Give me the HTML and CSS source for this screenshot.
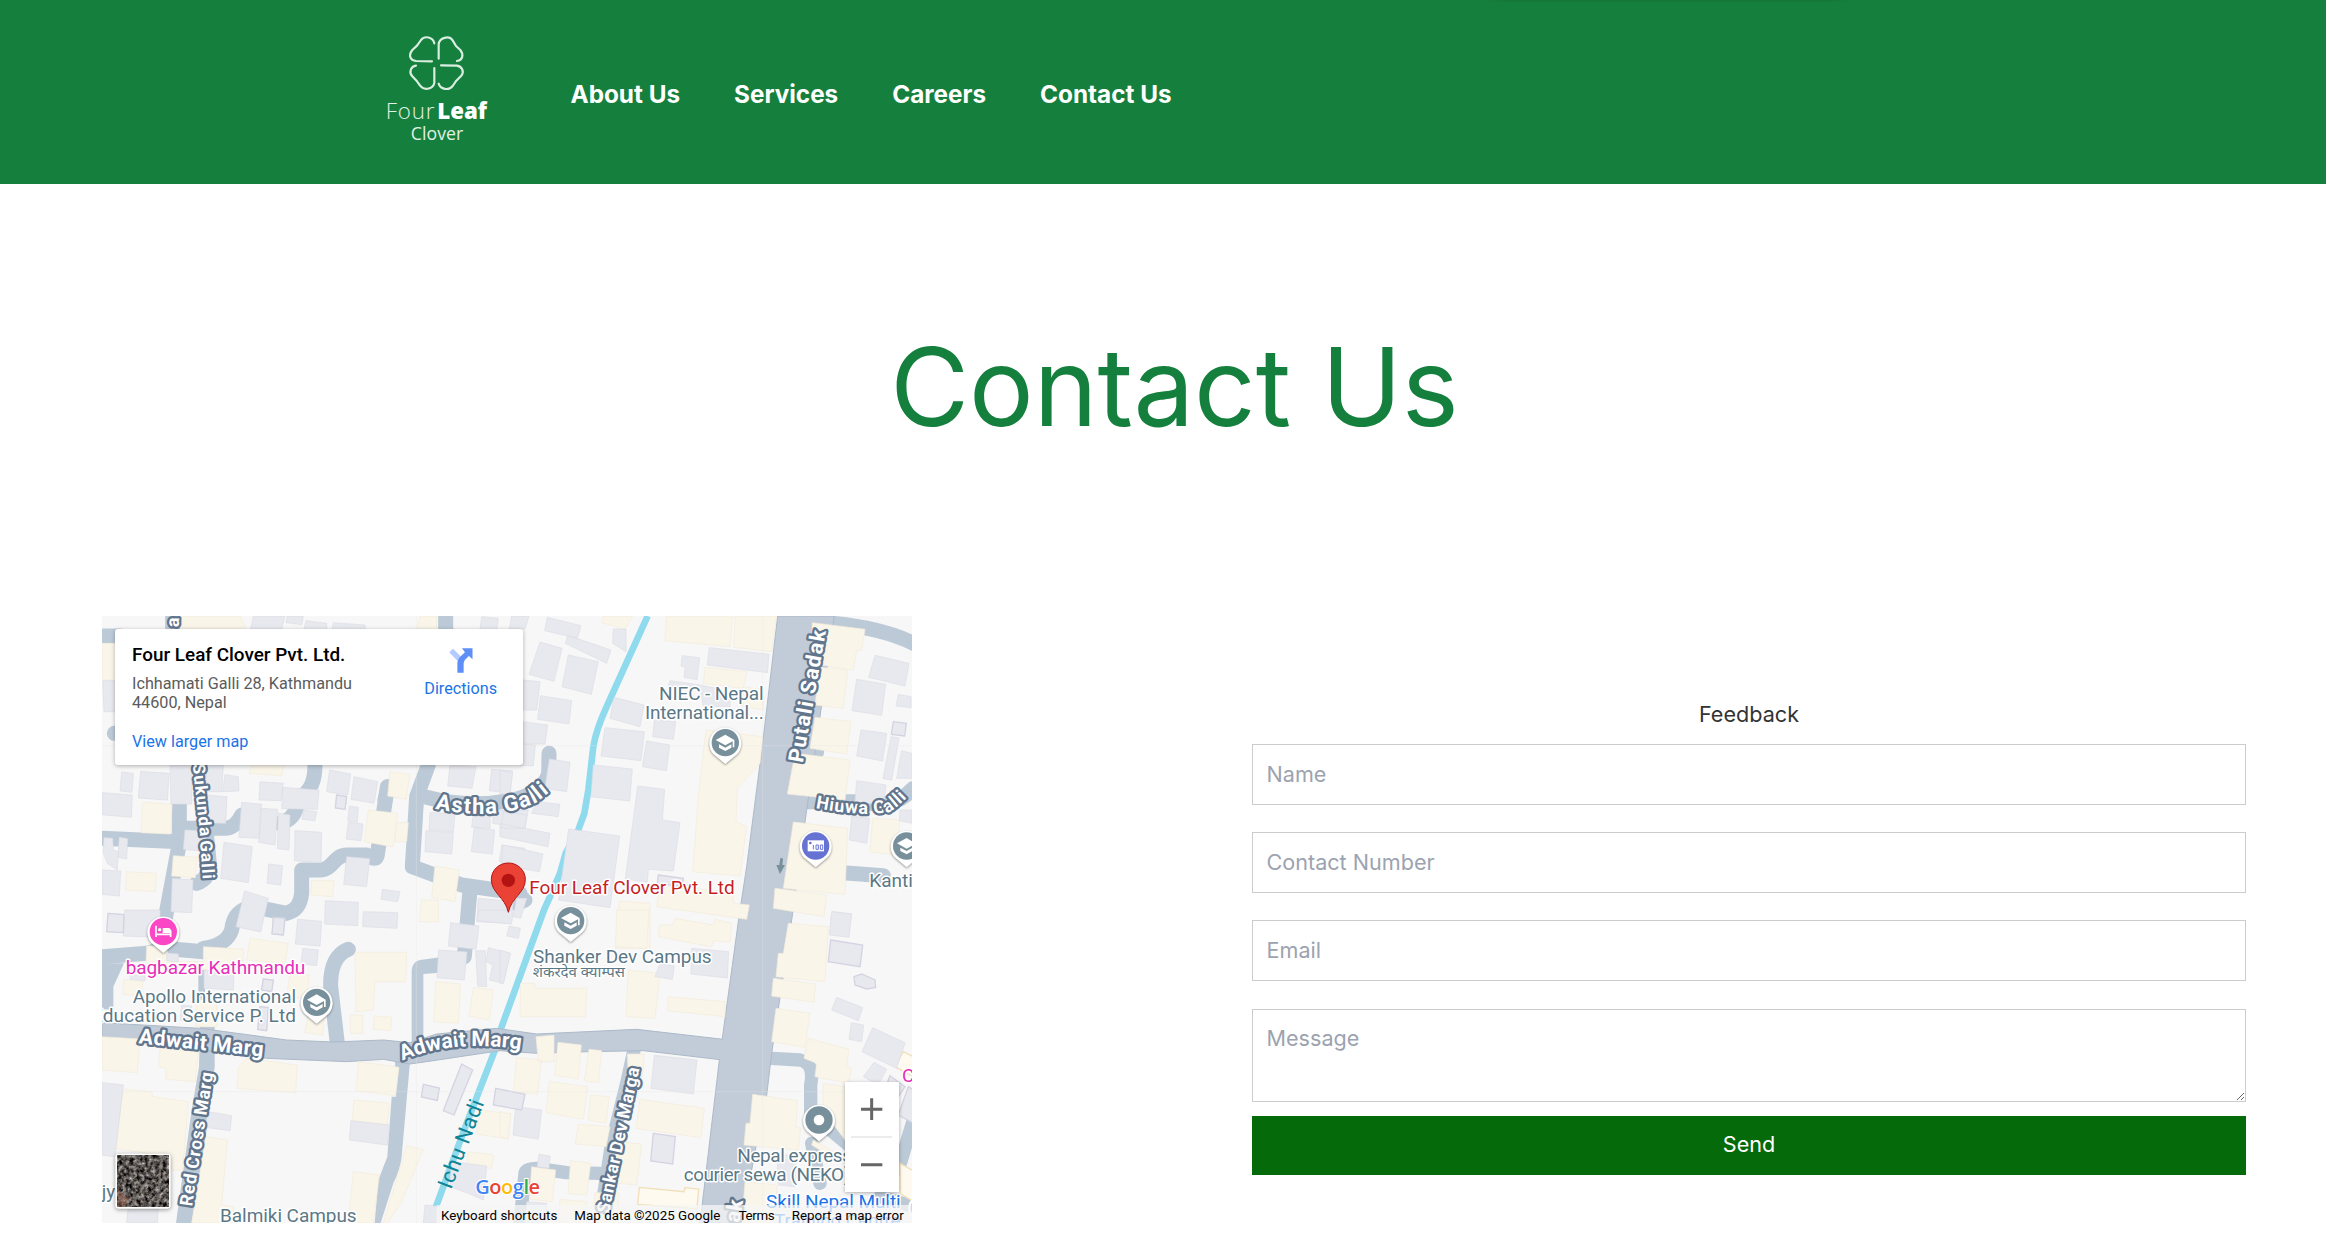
FILE: index.html
```html
<!DOCTYPE html>
<html lang="en">
<head>
<meta charset="utf-8">
<title>Contact Us - Four Leaf Clover</title>
<link rel="stylesheet" href="styles.css">
</head>
<body>
<header class="header">
  <svg class="logo" viewBox="0 0 360 375" role="img" aria-label="Four Leaf Clover">
    <g class="logo-lines">
      <path d="M178 55C174 36 149 31 138 45L126 62L112 75C99 92 106 106 123 108L171 109"/>
      <path d="M191 101V58C193 38 222 30 233 46L243 63L256 75C268 90 262 106 246 108"/>
      <path d="M123 122C107 124 101 142 112 154L126 169L137 184C150 199 176 190 178 173V129"/>
      <path d="M198 121L246 122C262 125 269 141 258 153L244 167L233 183C221 198 196 193 191 176"/>
    </g>
    <text class="logo-four" x="32" y="281" textLength="146">Four</text>
    <text class="logo-leaf" x="187" y="281" textLength="149" lengthAdjust="spacingAndGlyphs">Leaf</text>
    <text class="logo-clover" x="107" y="344" textLength="158">Clover</text>
  </svg>
  <nav class="nav">
    <a>About Us</a><a>Services</a><a>Careers</a><a>Contact Us</a>
  </nav>
</header>
<main>
  <h1 class="title">Contact Us</h1>
  <div class="columns">
    <section class="map">
      <svg class="map-canvas" viewBox="6 18 2430 1821">
        <defs>
          <g id="pin"><path class="pin-back" d="M0 64L-36 34A48 48 0 1 1 36 34Z"/></g>
          <g id="school"><use href="#pin"/><circle r="41" fill="#78909c"/><path fill="#fff" d="M0-24L-29-8 0 8 22-4V14H27V-8ZM-19 5V15L0 25 18 15V5L0 15Z"/></g>
          <filter id="satellite" x="0" y="0" width="100%" height="100%" color-interpolation-filters="sRGB">
            <feTurbulence type="fractalNoise" baseFrequency=".09" numOctaves="3" seed="8"/>
            <feColorMatrix values="1.1 .3 0 0 -.36  1.1 .26 0 0 -.36  1.1 .2 0 0 -.34  0 0 0 0 1"/>
          </filter>
        </defs>
        <path class="river" d="M1643 18L1520 290Q1488 360 1480 410L1465 540 1453 610 1435 660 1397 730 1380 790 1350 860 1332 900 1205 1250 1185 1320 1100 1540 990 1839"/>
        <g class="roads">
          <path class="w45" d="M6 78H60M218 18V60M1037 18V60M6 685L240 695M238 580V700L195 930 200 1020M250 655H375Q405 655 425 615M540 640Q580 630 590 590L610 555Q645 530 645 465M290 820Q330 805 328 760L320 680M500 898L560 910Q600 900 605 850V780H660C700 780 700 735 740 735H800Q830 755 832 735L862 530M985 465L950 560 937 770 1085 825 1260 850M1110 840L1093 1040"/>
          <path class="w45" d="M43 370H60M855 570L866 530M310 1015Q380 1005 395 960Q400 910 440 895"/>
          <path class="w45" d="M980 562Q1100 595 1230 572Q1330 550 1346 490L1347 430"/>
          <path class="w45" d="M2200 40Q2350 55 2440 100M2100 575H2290Q2380 600 2440 535M2230 788L2350 797M2110 426H2150M1250 880L1275 870"/>
          <path class="w45" d="M6 1040L140 1030 190 1015 310 1025M745 1018Q690 1040 692 1130L712 1300"/>
          <path d="M6 1060H72L40 1130V1200L6 1197ZM295 1060H315V1250H344V1370L320 1560 275 1839H228L275 1500 297 1370 300 1250H295ZM935 1300V1080Q937 1055 960 1050L1020 1042V1088L970 1092V1300ZM885 1355H930L905 1640Q900 1680 880 1720L842 1839H824L835 1710 862 1640 875 1460H888Z"/>
          <path class="w40" d="M1602 1320L1580 1420 1535 1600 1510 1760M1260 1839L1275 1690Q1278 1675 1310 1675L1400 1688 1500 1690M2015 1345L2100 1350Q2145 1360 2132 1425V1510L2245 1605 2320 1680M2440 1530L2395 1680M2135 1600L2160 1720M2340 1760L2440 1790"/>
        </g>
        <g class="main-roads">
          <path d="M6 1238L300 1255 560 1290 700 1296 850 1290 930 1298 1010 1272 1190 1255 1310 1272 1610 1258 1870 1288V1350L1630 1322 1465 1325 1310 1330 1200 1322 1000 1352 930 1362 850 1348 740 1355 500 1345 6 1280Z"/>
          <path d="M2033 18H2203L2120 600 2078 910 2015 1330 2000 1456 1970 1600 1925 1839H1800L1858 1350 1917 920 1940 770 1988 400Z"/>
        </g>
        <path class="road-fill" d="M1845 1287L1880 1291V1349L1845 1346ZM300 1262H345V1320H300Z"/>
        <!-- shops and commercial blocks -->
        <g class="shops">
          <path d="M6 100H50V210H6ZM240 18H420L437 55H240ZM960 18H1010V57H950ZM128 577L216 583 212 672 123 668ZM220 737L290 742 286 803 215 798ZM80 785L170 790 166 845 76 840ZM455 465H552L545 497 448 490ZM870 485L930 493 918 568 863 558ZM805 600L893 610 880 711 793 695ZM890 638H925L920 695H885ZM635 812H703L698 860 632 855ZM1005 768L1078 780 1065 875 995 862ZM965 870H1015V935H958Z"/>
          <path transform="translate(1200)" d="M310 18H398L375 57 305 38ZM500 18H697L690 110 495 92ZM705 18H830L815 125 702 112ZM615 172L740 185 730 235 610 220ZM730 230L790 240V300L728 290ZM618 360L788 380 780 460 712 535 708 635 740 650 720 798 578 785 595 560ZM937 38L1095 58 1085 120H1070L1060 180 930 160ZM960 172L1043 180 1030 295 945 285ZM945 322L1053 335 1040 432 930 415ZM885 430L1050 450 1035 570 862 552ZM880 636L1043 655 1035 853 850 835ZM1118 625L1200 630 1190 735 1110 725ZM825 835L980 855 972 920 820 895ZM480 828L700 845V880L748 885 740 928 470 890ZM358 873L450 880V1015H345Z"/>
          <path transform="translate(0 900)" d="M140 108H195L215 155H310V110L432 118 425 195 315 180 240 170 138 160ZM450 85L565 100 555 160 440 150ZM72 208L130 215 120 260 68 252ZM570 190L628 195 620 265 560 260ZM765 127H920L917 215H825L820 300 768 305ZM625 310L672 320 668 375 615 368ZM750 315H788V370H752ZM822 318L875 322 872 362 820 358ZM1007 215L1082 222 1075 340 1002 335ZM1120 232L1180 240 1168 330 1107 318ZM290 270H350V350H287ZM6 380L120 387 112 488 6 480ZM180 415L295 425 285 515 198 508V475L176 470ZM415 472L440 445 592 465 587 548 411 535ZM776 455L897 472 887 557 768 542ZM762 570L868 580 862 645 757 632ZM70 537L155 545 158 560 265 575 248 780H215L210 740 45 715ZM318 680L382 690 365 885 400 890V939H275ZM760 785L838 795 820 939H745ZM920 707L970 718 905 875 862 939H850ZM1140 600L1232 612 1225 687 1130 672ZM1105 725L1182 735 1175 775 1100 765Z"/>
          <path transform="translate(1200 900)" d="M350 0H447L440 115 347 110ZM525 25L640 45 645 28 695 40 690 97 640 92 635 110 475 80 478 45H518ZM385 180L480 190 465 325 378 320ZM62 220H105V235H260L257 320H60ZM505 260L675 275V320L502 302ZM865 40L985 50 975 215 828 200 835 130H850ZM820 205L947 222 942 277 815 258ZM828 295L930 310 915 412 815 395ZM925 385L1047 418 1040 470 1055 475 1045 520 945 500 950 460 912 445ZM108 380L162 376V455H115ZM174 397L244 405 235 507 164 495ZM267 418L305 422 295 518 253 512ZM382 432H432L428 498H385ZM50 443L125 450 112 553 40 545ZM148 515L263 530 250 628 138 608ZM272 555L328 560 318 640 265 630ZM235 643L330 650 318 710 226 702ZM352 695L425 702 410 825 335 818ZM420 568L613 595 603 683 408 655ZM95 770L167 780 157 875 88 868ZM212 752L272 760 260 855 204 850ZM285 848L357 850 350 939H280ZM0 605L32 612 25 687 0 680ZM180 868L260 875V939H176ZM758 553L892 572 888 650 902 655 895 720 732 705 738 640H750ZM970 520L1035 530V690L968 600ZM735 815L830 825V939H725ZM940 690L1010 730 1000 745 935 705Z"/>
          <path class="outlined" d="M1618 1732L1752 1745 1755 1733 1796 1737 1791 1796 1613 1783ZM2410 1325L2440 1340V1400L2385 1370ZM2400 1660L2440 1682V1775L2400 1750Z"/>
        </g>
        <!-- residential buildings -->
        <g class="houses">
          <path d="M460 18H555L545 57H452ZM562 18H610L605 44 558 38ZM618 32L680 40V60H612ZM700 38L795 45V60H695ZM1145 20L1195 25 1190 60H1140ZM8 212H46V305H12ZM65 486L100 490 96 547 60 543ZM122 484L208 490 202 570 115 564ZM210 465H275V582H213ZM318 465H370L365 545H322ZM375 494L415 500 417 543 368 545ZM480 515L550 520 543 572 477 570ZM548 532L657 540 652 598 545 596ZM612 600L650 605 645 632 606 628ZM689 480L752 492 743 555 680 545ZM762 500L833 515 822 580 753 568ZM710 555L740 560 735 598 706 594ZM6 548L97 555 94 622 6 614ZM425 577L485 583 478 685 417 682ZM482 595L533 598 525 705 476 697ZM535 610L570 615 567 720 532 716ZM585 662L665 667 663 758 583 752ZM748 588L775 592 772 637 743 633ZM745 637L789 642 783 692 738 687ZM320 555L381 560 377 640 322 638ZM255 660L320 663V725L250 718ZM12 683L38 685 40 720 55 725 52 780 22 760 10 730ZM58 682L83 686 80 747 54 742ZM372 697L457 710 445 818 362 805ZM506 762L548 767 542 825 501 820ZM740 740L809 746 800 830 731 823ZM6 780L62 783 58 858 6 853ZM217 805L279 810 275 908 213 905ZM434 843L505 865 482 966 408 950ZM676 872L775 877 773 947 674 942ZM847 838L900 845 893 875 843 868ZM790 905L893 908 891 955 788 950ZM1050 465L1128 470 1116 535 1043 528ZM1175 478L1237 482 1230 550 1168 542ZM990 607L1065 612 1060 665 987 660ZM1120 610L1170 615V655L1115 652ZM1180 600H1285L1275 655 1178 640ZM978 662L1060 668 1055 732 975 725ZM1123 652L1184 660 1177 732 1114 725ZM1205 705L1275 715V770L1198 755ZM1135 865L1240 875 1230 940 1130 935Z"/>
          <path transform="translate(1200)" d="M35 18H87L75 57H28ZM142 22L243 47 232 85 134 62ZM120 96L186 115 162 214 87 193ZM203 76L333 120 320 160 196 100ZM205 135L295 155 274 253 186 230ZM340 57H378V125L338 100ZM70 210L120 215 110 300H70ZM121 257L215 272 207 342 113 328ZM70 335L143 345 135 402H70ZM70 402L106 405 100 467H60ZM342 262L432 285 420 350 330 325ZM315 353L433 365 423 452 303 438ZM463 330L527 335 520 388 458 380ZM440 393L509 405 499 482 427 470ZM547 137L599 143 591 209 552 202 555 172 543 168ZM628 113L807 133 802 188 622 165ZM510 212L600 225 650 235 690 265V290L610 288 600 235 505 228ZM280 465L397 477 389 573 273 560ZM148 447L210 457 200 545 135 535ZM0 482L38 488 30 552H0ZM413 528L494 538 487 630 540 638 520 783 445 778 442 817 376 807ZM206 657L359 678 330 893 176 870ZM110 575L180 583 174 620 95 610ZM10 605L80 615 75 655H5ZM0 640L150 670 144 710 0 680ZM10 705L129 732 118 785 5 765ZM1125 136L1227 160 1215 228 1106 202ZM1070 208L1157 223 1145 316 1056 302ZM1195 253L1233 260V293L1188 288ZM1083 360L1160 370 1148 453 1070 438ZM1173 380L1197 384 1175 510 1149 506ZM1205 422L1236 430V505H1190ZM1070 512L1158 525 1150 585 1065 575ZM1055 618L1109 625 1100 700 1048 690ZM1200 600H1236V640L1198 632ZM998 905L1055 912 1050 930H992ZM80 865L62 925 40 920 50 865Z"/>
          <path transform="translate(0 900)" d="M24 10L72 14 70 68 20 65ZM74 0H180V82L70 78ZM520 22L555 25 550 75 516 72ZM593 28L665 34 660 108 586 102ZM608 115L655 120 650 167 603 162ZM200 130L235 132V155L200 153ZM312 180L402 185 400 240 312 235ZM92 180L135 185V212L90 208ZM490 207L520 210 515 245 485 240ZM480 290L505 293 500 362 473 358ZM245 285L275 288 270 335 241 330ZM1052 38L1137 48 1128 118 1045 108ZM1016 120L1101 126 1093 210 1011 203ZM1127 122H1156L1160 230 1133 228ZM1165 113L1230 130 1210 220 1168 210 1178 165 1158 155ZM1137 0H1240L1235 42 1131 32ZM6 518L70 525 45 740 6 735ZM325 605L395 617 390 662 315 652ZM753 632L869 645 862 705 748 690ZM85 890L175 895 172 939H80ZM975 885L1020 890V939H970ZM1055 755L1160 768 1150 870 1105 850 1050 830Z"/>
          <path transform="translate(1200 900)" d="M28 48L61 55 55 85 20 78ZM0 120L32 130 10 220H0ZM480 160L523 168 517 208 465 200ZM575 115L686 125 682 204 573 192ZM995 5L1055 12 1047 82 988 75ZM1010 262L1088 293 1075 332 995 300ZM1054 338L1091 345 1085 395 1047 388ZM1118 353L1215 398 1190 475 1086 425ZM1122 457L1160 478 1135 525 1090 500ZM463 436L591 450 580 552 453 535ZM47 590L125 600 115 688 39 675ZM117 733L150 738 147 775 112 770ZM80 875L140 880V939H75ZM830 730L890 740 885 830 835 825Z"/>
          <path class="edged" d="M710 555L740 560 735 598 706 594ZM1675 795L1750 805 1747 830 1672 820ZM2380 335L2419 340 2414 378 2374 373ZM24 910L72 914 70 968 20 965ZM520 922L555 925 550 975 516 972ZM490 1107L520 1110 515 1145 485 1140ZM480 1190L505 1193 500 1262 473 1258ZM1085 1362L1118 1380 1062 1515 1030 1502ZM970 1423L1018 1434 1012 1471 964 1461ZM1187 1435L1275 1453 1265 1500 1180 1485ZM2192 990L2288 1005 2280 1070 2185 1055ZM2262 1100L2285 1092 2325 1110 2327 1132 2300 1137 2265 1125ZM1660 1570L1726 1580 1718 1662 1652 1653ZM2370 1397L2415 1430 2395 1460 2350 1450ZM2425 1430L2440 1440V1540L2395 1515Z"/>
        </g>
        <path class="tile-lines" d="M949 18V1839M1988 18V1839M6 407H2436M6 1445H2436"/>
        <path fill="#78909c" d="M2041 745H2049L2047 765H2055L2040 792 2029 765H2038Z"/>
        <g class="road-labels">
          <text class="size-m" transform="translate(236 52) rotate(-88)">a</text>
          <text class="size-s" transform="translate(278 463) rotate(84)" textLength="218">Sukunda</text>
          <text class="size-s" transform="translate(300 692) rotate(86)" textLength="116">Galli</text>
          <path id="astha" fill="none" stroke="none" d="M1005 596Q1190 635 1310 577L1375 525"/>
          <text class="size-l"><textPath href="#astha" textLength="360">Astha Galli</textPath></text>
          <text class="size-xl" transform="translate(2108 460) rotate(-80)" textLength="402">Putali Sadak</text>
          <path id="hiuwa" fill="none" stroke="none" d="M2146 594Q2290 622 2370 605 2410 580 2450 530"/>
          <text class="size-m"><textPath href="#hiuwa" textLength="292">Hiuwa Galli</textPath></text>
          <text class="size-xl" transform="translate(115 1300) rotate(6)" textLength="376">Adwait Marg</text>
          <path id="adwait" fill="none" stroke="none" d="M907 1352Q1060 1285 1275 1320"/>
          <text class="size-xl"><textPath href="#adwait" textLength="362">Adwait Marg</textPath></text>
          <text class="size-m" transform="translate(276 1790) rotate(-81)" textLength="406">Red Cross Marg</text>
          <text class="size-m" transform="translate(1526 1812) rotate(-78)" textLength="446">Sankar Dev Marga</text>
          <text class="size-xl" transform="translate(1918 1840) rotate(-80)">ak</text>
        </g>
        <text class="river-label" transform="translate(1053 1740) rotate(-69)" textLength="280">Ichu Nadi</text>
        <use href="#school" x="1876" y="398"/>
        <use href="#school" x="2420" y="708"/>
        <use href="#school" x="1412" y="932"/>
        <use href="#school" x="650" y="1177"/>
        <g transform="translate(2147 708)"><use href="#pin"/><circle r="41" fill="#6773d3"/><path fill="#fff" d="M-24-17H25V16H-24Z"/><circle cx="-16" cy="-9" r="4" fill="#6773d3"/><path class="note" d="M-7-3V10M1-3H8V10H1ZM14-3H21V10H14Z"/></g>
        <g transform="translate(190 965)"><use href="#pin"/><circle r="41" fill="#fb46c6"/><path stroke="#fff" stroke-width="5" fill="none" d="M-22-18V16M-22 8H22M22 16V-4"/><circle cx="-11" cy="-6" r="5" fill="#fff"/><path fill="#fff" d="M-2-11H16Q23-10 23 0V4H-2Z"/></g>
        <g transform="translate(2157 1530)"><use href="#pin"/><circle r="41" fill="#78909c"/><circle r="16" fill="#fff"/></g>
        <g class="place-labels">
          <text x="1677" y="270" textLength="314">NIEC - Nepal</text>
          <text x="1635" y="328" textLength="356">International...</text>
          <text x="2308" y="832">Kanti</text>
          <text x="1299" y="1058" textLength="536">Shanker Dev Campus</text>
          <text class="nepali" x="1298" y="1102" textLength="277" lengthAdjust="spacingAndGlyphs">शंकरदेव क्याम्पस</text>
          <text x="98" y="1178" textLength="490">Apollo International</text>
          <text x="-24" y="1235" textLength="612">Education Service P. Ltd</text>
          <text x="360" y="1836" textLength="410">Balmiki Campus</text>
          <text x="5" y="1765">jy</text>
          <text x="1912" y="1656" textLength="344">Nepal express</text>
          <text x="1751" y="1713" textLength="500">courier sewa (NEKO)</text>
          <text class="pink" x="77" y="1092" textLength="539">bagbazar Kathmandu</text>
          <text class="pink" x="2406" y="1415">C</text>
          <text class="blue" x="1998" y="1795" textLength="404">Skill Nepal Multi</text>
          <text class="blue" x="2022" y="1851" textLength="380">Training Centre</text>
          <text class="red" x="1288" y="853" textLength="616">Four Leaf Clover Pvt. Ltd</text>
        </g>
        <circle class="blue-dot" cx="2460" cy="1795" r="32"/>
        <path fill="#ea4335" stroke="#b31412" stroke-width="3" d="M1225 907C1215 860 1174 850 1174 808A51 49 0 0 1 1276 808C1276 850 1235 860 1225 907Z"/>
        <circle cx="1225" cy="811" r="20" fill="#b31412"/>
        <text class="google" x="1126" y="1753"><tspan fill="#4285f4">G</tspan><tspan fill="#ea4335">o</tspan><tspan fill="#fbbc04">o</tspan><tspan fill="#4285f4">g</tspan><tspan fill="#34a853">l</tspan><tspan fill="#ea4335">e</tspan></text>
        <path class="credits-back" d="M1010 1785H2436V1839H1010Z"/>
        <g class="credits">
          <text x="1023" y="1829" textLength="349">Keyboard shortcuts</text>
          <text x="1423" y="1829" textLength="438">Map data ©2025 Google</text>
          <text x="1916" y="1829" textLength="108">Terms</text>
          <text x="2075" y="1829" textLength="336">Report a map error</text>
        </g>
        <g class="thumb">
          <rect x="46" y="1631" width="166" height="165" rx="10" fill="#fff"/>
          <rect x="52" y="1636" width="155" height="154" filter="url(#satellite)"/>
          <path d="M185 1636L172 1790M145 1710L90 1790" stroke="#8d8781" stroke-width="6" opacity=".6"/>
          <path d="M52 1740L90 1765 75 1790H52Z" fill="#a9745c" opacity=".45"/>
        </g>
      </svg>
      <div class="place-card">
        <div>
          <div class="place-name">Four Leaf Clover Pvt. Ltd.</div>
          <div class="place-address">Ichhamati Galli 28, Kathmandu<br>44600, Nepal</div>
          <a class="place-link">View larger map</a>
        </div>
        <a class="directions">
          <svg viewBox="0 0 72 76"><path fill="#b3cbff" d="M12 2L38 28 28 42 0 13Z"/><path fill="#5e8ff7" d="M39 1H71V34L60 24 49 35Q44 40 44 48V75H25V48Q25 34 36 24L48 13Z"/></svg>
          Directions
        </a>
      </div>
      <div class="zoom">
        <svg viewBox="0 0 162 330"><path stroke="#666" stroke-width="9" d="M48 82H112M80 49V114M48 248H112"/><path stroke="#e6e6e6" stroke-width="5" d="M18 165H141"/></svg>
      </div>
    </section>
    <form class="form">
      <label class="form-title">Feedback</label>
      <input class="field" placeholder="Name">
      <input class="field" placeholder="Contact Number">
      <input class="field" placeholder="Email">
      <textarea class="field message" placeholder="Message"></textarea>
      <button class="send" type="button">Send</button>
    </form>
  </div>
</main>
</body>
</html>
```
FILE: styles.css
```css
* { box-sizing: border-box; }
html { font-size: 21.6px; }
body { margin: 0; background: #fff; font-family: Inter, sans-serif; color: #333; overflow: hidden; }
.header { display: flex; align-items: flex-start; height: 184px; padding: 25px 0 0 375px; background: linear-gradient(90deg, transparent, rgba(0, 0, 0, .07) 8%, rgba(0, 0, 0, .07) 92%, transparent) 1480px 0 / 375px 2px no-repeat #15803d; }
.logo { width: 120px; height: 125px; flex: none; }
.logo-lines { fill: none; stroke: #d9eee0; stroke-width: 6.5; stroke-linecap: round; stroke-linejoin: round; }
.logo text { font-family: "Open Sans", Lato, sans-serif; fill: #e0f1e5; }
.logo-four { font-size: 67px; font-weight: 300; }
.logo .logo-leaf { font-size: 67px; font-weight: 800; fill: #fff; }
.logo-clover { font-size: 53px; font-weight: 400; }
.nav { display: flex; gap: 54px; padding: 53px 0 0 75.5px; }
.nav a { font-size: 24.3px; line-height: 32px; font-weight: 700; color: #fff; white-space: nowrap; }
.title { margin: 0; padding: 149px 0 0 23px; font-size: 108px; line-height: 108px; font-weight: 400; text-align: center; color: #15803d; }
.columns { display: flex; justify-content: space-between; align-items: flex-start; padding: 175px 80px 0 102px; }
.map { position: relative; width: 810px; height: 607px; overflow: hidden; font-family: Roboto, sans-serif; }
.map-canvas { display: block; width: 810px; height: 607px; background: #f7f7f7; }
.map-canvas text { font-family: Roboto, sans-serif; }
.river { fill: none; stroke: #90daee; stroke-width: 20; }
.roads { fill: #bccad7; }
.roads .w45, .roads .w40 { fill: none; stroke: #bccad7; stroke-width: 45; stroke-linecap: round; stroke-linejoin: round; }
.roads .w40 { stroke-width: 40; }
.main-roads { fill: #c2cbd8; stroke: #acbac9; stroke-width: 3; }
.road-fill { fill: #c2cbd8; }
.shops { fill: #faf5e9; stroke: #f3ecdb; stroke-width: 2; }
.shops .outlined { fill: #fefaf0; stroke: #f0dfb9; stroke-width: 4; }
.houses { fill: #e8e9ef; stroke: #dcdde6; stroke-width: 2; }
.houses .edged { stroke: #d5d3e2; stroke-width: 4; }
.tile-lines { fill: none; stroke: #e8e8e4; stroke-width: 2; opacity: .5; }
.road-labels text { font-weight: 700; fill: #fff; stroke: #61758d; stroke-width: 14; stroke-linejoin: round; paint-order: stroke; }
.size-s { font-size: 51px; }
.size-m { font-size: 54px; }
.size-l { font-size: 66px; }
.size-xl { font-size: 64px; }
.map-canvas .river-label { font-size: 64px; fill: #0e8495; }
.pin-back { fill: #fff; filter: drop-shadow(0 3px 3px rgba(0, 0, 0, .4)); }
.note { fill: none; stroke: #6773d3; stroke-width: 3; }
.place-labels text { font-size: 57px; fill: #5b7886; stroke: #fff; stroke-width: 9; stroke-linejoin: round; paint-order: stroke; }
.place-labels .nepali { font-family: "Noto Sans", Roboto, sans-serif; font-size: 44px; }
.place-labels .pink { fill: #e62eb8; }
.place-labels .blue { fill: #1a73e8; }
.place-labels .red { fill: #c5221f; }
.blue-dot { fill: #1e9bf0; stroke: #fff; stroke-width: 8; }
.map-canvas .google { font-family: "Open Sans", sans-serif; font-size: 60px; font-weight: 600; letter-spacing: -1.5px; stroke: #fff; stroke-width: 6; paint-order: stroke; }
.credits-back { fill: #f5f5f5; opacity: .75; }
.credits text { font-size: 40px; fill: #000; }
.thumb { filter: drop-shadow(0 3px 6px rgba(0, 0, 0, .4)); }
.place-card { position: absolute; left: 13px; top: 13px; width: 408px; height: 136px; padding: 15px 26px 0 17px; display: flex; justify-content: space-between; background: #fff; border-radius: 3px; box-shadow: 0 1px 4px rgba(0, 0, 0, .3); font-size: 16.2px; line-height: 19px; }
.place-name { font-size: 18.9px; line-height: 22px; font-weight: 500; color: #000; }
.place-address { margin-top: 8px; color: #5b5b5b; white-space: nowrap; }
.place-link { display: block; margin-top: 20px; color: #1a73e8; }
.directions { display: flex; flex-direction: column; align-items: center; gap: 6px; padding-top: 4px; color: #1a73e8; }
.directions svg { width: 24px; height: 25px; }
.zoom { position: absolute; left: 743px; top: 466px; width: 54px; height: 110px; background: #fff; box-shadow: 0 1px 4px rgba(0, 0, 0, .3); }
.zoom svg { display: block; width: 54px; height: 110px; }
.form { display: flex; flex-direction: column; width: 994px; padding-top: 82px; }
.form-title { height: 46px; font-size: 21.6px; line-height: 32px; text-align: center; }
.field { display: block; width: 100%; height: 61px; margin: 0 0 27.2px; padding: 12.5px 13.5px 14.5px; border: 1px solid #ccc; border-radius: 0; background: #fff; font: 400 21.6px/32px Inter, sans-serif; outline: 0; }
.field::placeholder { color: #9ca3af; opacity: 1; }
.message { height: 93px; margin-bottom: 14px; resize: vertical; }
.send { height: 59px; border: 0; padding: 0 0 2px; background: #056b0a; color: #fff; font: 400 21.6px/32px Inter, sans-serif; }
```
